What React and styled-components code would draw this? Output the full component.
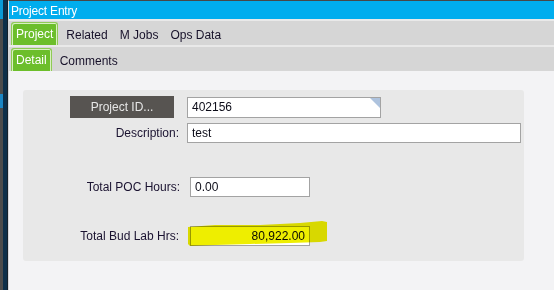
import styled, { createGlobalStyle } from "styled-components";

const Global = createGlobalStyle`
  html, body {
    margin: 0;
    padding: 0;
    background: #f3f3f5;
  }
  body {
    font-family: "Liberation Sans", Arial, sans-serif;
    font-size: 12px;
    color: #17112a;
  }
`;

const Frame = styled.div`
  display: flex;
  width: 554px;
  height: 290px;
  overflow: hidden;
`;

const LeftEdge = styled.div`
  position: relative;
  width: 8px;
  flex: none;
  background: linear-gradient(
    to right,
    #4b4b4b 0 3px,
    #0d2f49 3px 7px,
    #14202a 7px 8px
  );

  &::before {
    content: "";
    position: absolute;
    left: 0;
    top: 0;
    width: 3px;
    height: 19px;
    background: #0a9ad6;
  }

  &::after {
    content: "";
    position: absolute;
    left: 0;
    top: 94px;
    width: 3px;
    height: 14px;
    background: #1b86c4;
  }
`;

const Main = styled.div`
  flex: 1;
  display: flex;
  flex-direction: column;
  border-left: 1px solid #d4d7da;
  border-top: 1px solid #474747;
  background: #f3f3f5;
`;

const TitleBar = styled.div`
  height: 18px;
  display: flex;
  align-items: center;
  padding-left: 2px;
  background: #00adee;
  color: #ffffff;
  font-size: 12px;
  letter-spacing: -0.2px;
  padding-top: 1px;
  box-sizing: border-box;
`;

const TabBar = styled.div`
  height: 24px;
  margin-top: 2px;
  display: flex;
  align-items: stretch;
  gap: 4px;
  padding-left: 2px;
  background: #d6d6d6;
  box-shadow: 0 -2px 0 #e9e9e9;
`;

const Tab = styled.div`
  display: flex;
  align-items: center;
  padding: ${(p) => (p.$active ? "0 4px 1px" : "3px 4px 0")};
  margin-top: ${(p) => (p.$active ? "1px" : "0")};
  color: ${(p) => (p.$active ? "#ffffff" : "#17112a")};
  background: ${(p) => (p.$active ? "#6cbe2b" : "transparent")};
  border: ${(p) => (p.$active ? "1px solid #8fcb55" : "none")};
  border-bottom: none;
  border-radius: 3px 3px 0 0;
  box-shadow: ${(p) => (p.$active ? "inset 1px 1px 0 #d9f0c3, inset -1px 0 0 #d9f0c3" : "none")};
  font-size: 12px;
`;

const Content = styled.div`
  flex: 1;
  padding: 19px 0 0 14px;
  background: #f3f3f5;
`;

const Panel = styled.div`
  width: 501px;
  height: 171px;
  box-sizing: border-box;
  padding-top: 6px;
  background: #e8e8e8;
  border-radius: 3px;
`;

const Row = styled.div`
  display: flex;
  align-items: center;
  margin-top: ${(p) => p.$top || 0}px;
`;

const LabelCell = styled.div`
  width: 157px;
  flex: none;
  display: flex;
  justify-content: flex-end;
  padding-right: ${(p) => p.$pad || 0}px;
  box-sizing: border-box;
  font-size: 12px;
  color: #1a1230;
`;

const LookupButton = styled.div`
  width: 104px;
  height: 22px;
  display: flex;
  align-items: center;
  justify-content: center;
  background: #575451;
  color: #e6e6e6;
  font-size: 12px;
`;

const FieldWrap = styled.div`
  position: relative;
  margin-left: ${(p) => p.$left}px;
`;

const Field = styled.div`
  position: relative;
  width: ${(p) => p.$width}px;
  height: ${(p) => p.$height || 20}px;
  box-sizing: border-box;
  display: flex;
  align-items: center;
  justify-content: ${(p) => (p.$right ? "flex-end" : "flex-start")};
  padding: 0 4px;
  background: #ffffff;
  border: 1px solid #a3a3a3;
  color: #0c0c18;
  font-size: 12px;

  ${(p) =>
    p.$corner &&
    `
    &::after {
      content: "";
      position: absolute;
      top: 0;
      right: 0;
      border-top: 10px solid #aec3de;
      border-left: 10px solid transparent;
    }
  `}
`;

const Highlight = styled.svg`
  position: absolute;
  left: -4px;
  top: -5px;
  width: 144px;
  height: 28px;
  mix-blend-mode: multiply;
  pointer-events: none;
`;

export default function App() {
  return (
    <>
      <Global />
      <Frame>
        <LeftEdge />
        <Main>
          <TitleBar>Project Entry</TitleBar>
          <TabBar>
            <Tab $active>Project</Tab>
            <Tab>Related</Tab>
            <Tab>M Jobs</Tab>
            <Tab>Ops Data</Tab>
          </TabBar>
          <TabBar>
            <Tab $active>Detail</Tab>
            <Tab>Comments</Tab>
          </TabBar>
          <Content>
            <Panel>
              <Row>
                <LabelCell $pad={6}>
                  <LookupButton>Project ID...</LookupButton>
                </LabelCell>
                <FieldWrap $left={7}>
                  <Field $width={194} $height={21} $corner>
                    402156
                  </Field>
                </FieldWrap>
              </Row>
              <Row $top={5}>
                <LabelCell $pad={1}>Description:</LabelCell>
                <FieldWrap $left={7}>
                  <Field $width={334}>test</Field>
                </FieldWrap>
              </Row>
              <Row $top={34}>
                <LabelCell>Total POC Hours:</LabelCell>
                <FieldWrap $left={10}>
                  <Field $width={120}>0.00</Field>
                </FieldWrap>
              </Row>
              <Row $top={29}>
                <LabelCell $pad={1}>Total Bud Lab Hrs:</LabelCell>
                <FieldWrap $left={10}>
                  <Field $width={120} $right>
                    80,922.00
                  </Field>
                  <Highlight viewBox="0 0 144 28">
                    <path
                      d="M2 6 L29 4 L74 4 L114 2 L136 0 L141 1 L141 20 L134 21 L104 22 L64 23 L29 24 L4 25 L2 23 Z"
                      fill="#eeee00"
                    />
                  </Highlight>
                </FieldWrap>
              </Row>
            </Panel>
          </Content>
        </Main>
      </Frame>
    </>
  );
}
